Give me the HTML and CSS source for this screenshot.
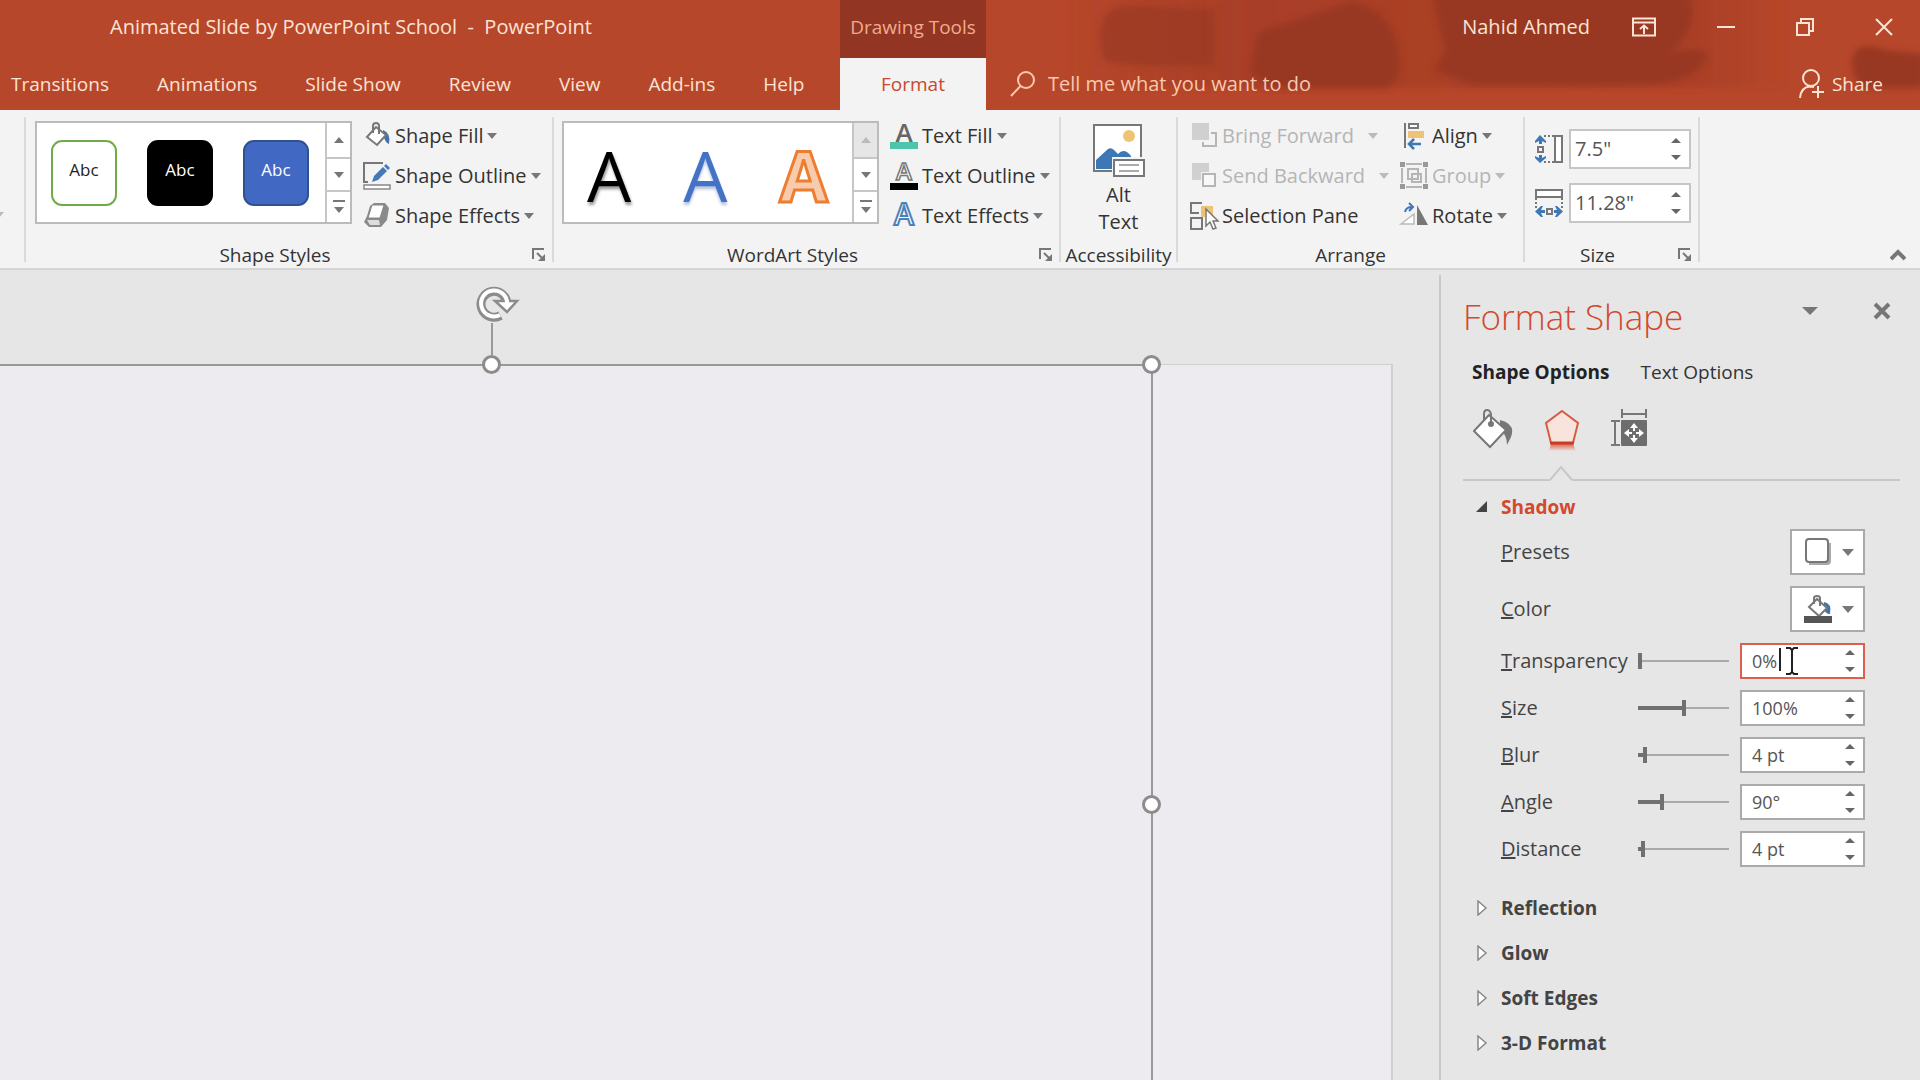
FILE: index.html
```html
<!DOCTYPE html>
<html lang="en">
<head>
    <meta charset="UTF-8">
    <meta name="viewport" content="width=device-width, initial-scale=1.0">
    <title>Animated Slide by PowerPoint School - PowerPoint</title>
    <link rel="stylesheet" href="styles.css">
</head>
<body>
    <header class="app-header">
        <svg class="header-art" width="920" height="110" viewBox="0 0 920 110" aria-hidden="true">
            <defs>
                <filter id="soft" x="-10%" y="-10%" width="120%" height="120%"><feGaussianBlur stdDeviation="3"/></filter>
                <linearGradient id="artFade" x1="0" x2="1" y1="0" y2="0">
                    <stop offset="0" stop-color="#a03a24" stop-opacity="0"/>
                    <stop offset="0.2" stop-color="#a03a24" stop-opacity="0.6"/>
                    <stop offset="0.75" stop-color="#a03a24" stop-opacity="0.5"/>
                    <stop offset="0.85" stop-color="#a03a24" stop-opacity="0"/>
                </linearGradient>
            </defs>
            <rect x="60" y="-10" width="860" height="98" fill="url(#artFade)" filter="url(#soft)"/>
            <g fill="#993824" filter="url(#soft)">
                <path d="M105 14Q120 2 150 6L215 10V66H140L105 62Q95 40 105 14Z" opacity="0.7"/>
                <path d="M258 32L350 2Q385 5 396 40T388 88H270L250 72Z"/>
                <path d="M432-5H690Q700 30 670 52Q710 45 707 58Q695 82 650 85H470L434 70L445 50Z"/>
                <path d="M856 50Q866 42 885 50L925 54V88H862Q845 65 856 50Z"/>
            </g>
        </svg>

        <div class="title-bar">
            <div class="doc-title">Animated Slide by PowerPoint School&nbsp; -&nbsp; PowerPoint</div>
            <div class="tool-title">Drawing Tools</div>
            <div class="window-controls">
                <span class="user-name">Nahid Ahmed</span>
                <button type="button" class="window-btn" aria-label="Ribbon display options">
                    <svg width="24" height="20" viewBox="0 0 24 20" fill="none" stroke="currentColor" stroke-width="2"><path d="M1 1.500H23V18.500H1Z"/><path d="M1 5.500H23M12 17V9M8 12L12 8.500L16 12"/></svg>
                </button>
                <button type="button" class="window-btn" aria-label="Minimize">
                    <svg width="18" height="18" viewBox="0 0 18 18" stroke="currentColor" stroke-width="2"><path d="M0 9H18"/></svg>
                </button>
                <button type="button" class="window-btn" aria-label="Restore">
                    <svg width="18" height="18" viewBox="0 0 18 18" fill="none" stroke="currentColor" stroke-width="2"><path d="M1 5H13V17H1ZM5 5V1H17V13H13"/></svg>
                </button>
                <button type="button" class="window-btn" aria-label="Close">
                    <svg width="18" height="18" viewBox="0 0 18 18" stroke="currentColor" stroke-width="2"><path d="M1 1L17 17M17 1L1 17"/></svg>
                </button>
            </div>
        </div>

        <nav class="tab-bar">
            <div class="tabs">
                <button type="button" class="tab">Transitions</button>
                <button type="button" class="tab">Animations</button>
                <button type="button" class="tab">Slide Show</button>
                <button type="button" class="tab">Review</button>
                <button type="button" class="tab">View</button>
                <button type="button" class="tab">Add-ins</button>
                <button type="button" class="tab">Help</button>
            </div>
            <button type="button" class="tab tab-active">Format</button>
            <button type="button" class="tell-me">
                <svg width="26" height="28" viewBox="0 0 26 28" fill="none" stroke="currentColor" stroke-width="2"><circle cx="16" cy="10" r="8"/><path d="M10.500 16L1 26"/></svg>
                Tell me what you want to do
            </button>
            <button type="button" class="share-btn">
                <svg width="28" height="30" viewBox="0 0 28 30" fill="none" stroke="currentColor" stroke-width="2"><circle cx="13" cy="9" r="8"/><path d="M2 29Q3 18 12 17.500L16 18M20 17V29M14 23H26"/></svg>
                Share
            </button>
        </nav>
    </header>

    <section class="ribbon">
        <div class="group group-cut">
            <span class="caret caret-light"></span>
        </div>

        <div class="group group-styles">
            <div class="group-body">
                <div class="gallery">
                    <div class="gallery-items">
                        <button type="button" class="style-tile tile-outline">Abc</button>
                        <button type="button" class="style-tile tile-black">Abc</button>
                        <button type="button" class="style-tile tile-blue">Abc</button>
                    </div>
                    <div class="gallery-scroll">
                        <button type="button" aria-label="Previous styles"><span class="caret caret-up"></span></button>
                        <button type="button" aria-label="Next styles"><span class="caret"></span></button>
                        <button type="button" aria-label="More styles"><span class="caret caret-more"></span></button>
                    </div>
                </div>
                <div class="commands">
                    <button type="button" class="command">
                        <svg class="icon" viewBox="0 0 28 28"><path d="M20 8Q28 11 26 22Q22 21 20 12Z" fill="#4472a8"/><path d="M4 15L13 5L23 13L14 23Z" fill="#fff" stroke="#777" stroke-width="2"/><path d="M10 11V4Q10 1 13 1T16 4V12" fill="none" stroke="#777" stroke-width="2"/></svg>
                        Shape Fill <span class="caret"></span>
                    </button>
                    <button type="button" class="command">
                        <svg class="icon" viewBox="0 0 28 28"><path d="M20 1H1V20H5" fill="none" stroke="#777" stroke-width="2"/><path d="M1 23H27V27H1Z" fill="#fff" stroke="#888" stroke-width="1.500"/><path d="M9 20L11 14L20 5L24 9L15 18Z" fill="#4478b8"/><path d="M21 4L23 2L27 6L25 8Z" fill="#4478b8"/></svg>
                        Shape Outline <span class="caret"></span>
                    </button>
                    <button type="button" class="command">
                        <svg class="icon" viewBox="0 0 28 28"><path d="M7 4L11 1H22L26 6L24 18L18 25H6L1 20L4 14Z" fill="#8a8a8a"/><path d="M9 3H21L17 16H5Z" fill="#fff" stroke="#888"/><path d="M4 18H16L17 23H7Z" fill="#ddd"/></svg>
                        Shape Effects <span class="caret"></span>
                    </button>
                </div>
            </div>
            <div class="group-caption">Shape Styles</div>
            <button type="button" class="launcher" aria-label="Format shape"><svg width="14" height="14" viewBox="0 0 14 14"><path d="M1 11V1H12M5 5L11 11" fill="none" stroke="#777" stroke-width="2"/><path d="M13 6V13H6Z" fill="#777"/></svg></button>
        </div>

        <div class="group group-wordart">
            <div class="group-body">
                <div class="gallery">
                    <div class="gallery-items wordart-items">
                        <button type="button" class="wordart wordart-black">A</button>
                        <button type="button" class="wordart wordart-blue">A</button>
                        <button type="button" class="wordart wordart-orange">A</button>
                    </div>
                    <div class="gallery-scroll">
                        <button type="button" class="scroll-off" aria-label="Previous WordArt" disabled><span class="caret caret-up caret-light"></span></button>
                        <button type="button" aria-label="Next WordArt"><span class="caret"></span></button>
                        <button type="button" aria-label="More WordArt"><span class="caret caret-more"></span></button>
                    </div>
                </div>
                <div class="commands">
                    <button type="button" class="command">
                        <svg class="icon" viewBox="0 0 28 28"><text x="14" y="20" class="glyph glyph-fill">A</text><path d="M0 20H28V27H0Z" fill="#4cc5aa"/></svg>
                        Text Fill <span class="caret"></span>
                    </button>
                    <button type="button" class="command">
                        <svg class="icon" viewBox="0 0 28 28"><text x="14" y="18" class="glyph glyph-outline">A</text><path d="M0 21H28V28H0Z" fill="#000"/></svg>
                        Text Outline <span class="caret"></span>
                    </button>
                    <button type="button" class="command">
                        <svg class="icon" viewBox="0 0 28 28"><text x="14" y="23" class="glyph glyph-glow">A</text></svg>
                        Text Effects <span class="caret"></span>
                    </button>
                </div>
            </div>
            <div class="group-caption">WordArt Styles</div>
            <button type="button" class="launcher" aria-label="Format text effects"><svg width="14" height="14" viewBox="0 0 14 14"><path d="M1 11V1H12M5 5L11 11" fill="none" stroke="#777" stroke-width="2"/><path d="M13 6V13H6Z" fill="#777"/></svg></button>
        </div>

        <div class="group group-access">
            <button type="button" class="alt-text">
                <svg width="52" height="54" viewBox="0 0 52 54"><path d="M1 1H48V47H1Z" fill="#fff" stroke="#777" stroke-width="2"/><circle cx="36" cy="12" r="6" fill="#efc374"/><path d="M3 45V36L15 25Q18 23 21 26L25 30Q31 23 38 32V45Z" fill="#3d77b5"/><path d="M19 33H53V54H19Z" fill="#f3f3f3"/><path d="M21 36H51V52H21Z" fill="#fff" stroke="#777" stroke-width="2"/><path d="M26 41H46M26 47H46" stroke="#aaa" stroke-width="2"/></svg>
                <span>Alt<br>Text</span>
            </button>
            <div class="group-caption">Accessibility</div>
        </div>

        <div class="group group-arrange">
            <div class="group-body">
                <div class="commands commands-wide">
                    <button type="button" class="command" disabled>
                        <svg class="icon" viewBox="0 0 28 28"><path d="M2 1H19V18H2Z" fill="#d0d0d0"/><path d="M21 11H26V24H13V20" fill="none" stroke="#b5b5b5" stroke-width="2"/></svg>
                        Bring Forward <span class="caret caret-light caret-split"></span>
                    </button>
                    <button type="button" class="command" disabled>
                        <svg class="icon" viewBox="0 0 28 28"><path d="M2 1H19V10H11V18H2Z" fill="#d0d0d0"/><path d="M13 12H25V24H13Z" fill="#f8f8f8" stroke="#b5b5b5" stroke-width="2"/></svg>
                        Send Backward <span class="caret caret-light caret-split"></span>
                    </button>
                    <button type="button" class="command">
                        <svg class="icon" viewBox="0 0 28 28"><path d="M12 1H1V11H9M1 16H12V27H1Z" fill="none" stroke="#777" stroke-width="2"/><path d="M11 4H23V14H19V8H15V15H11Z" fill="#efc374"/><path d="M16 7V24L20 20L23 27L26 26L23 19H28Z" fill="#fff" stroke="#777" stroke-width="1.500"/></svg>
                        Selection Pane
                    </button>
                </div>
                <div class="commands">
                    <button type="button" class="command">
                        <svg class="icon" viewBox="0 0 28 28"><path d="M5 1V26" stroke="#777" stroke-width="2"/><path d="M9 2H18V6H9Z" fill="#fff" stroke="#777" stroke-width="2"/><path d="M8 9H24V16H8Z" fill="#efc374"/><path d="M21 22H9M14 17L9 22L14 27" fill="none" stroke="#3d77b5" stroke-width="2.500"/></svg>
                        Align <span class="caret"></span>
                    </button>
                    <button type="button" class="command" disabled>
                        <svg class="icon" viewBox="0 0 28 28"><path d="M6 2H22M6 25H22M2 6V21M26 6V21M8 7H18V17H8ZM12 12H21V20H12Z" fill="none" stroke="#b5b5b5" stroke-width="2"/><path d="M0 0H5V5H0ZM23 0H28V5H23ZM0 22H5V27H0ZM23 22H28V27H23Z" fill="#999"/></svg>
                        Group <span class="caret caret-light"></span>
                    </button>
                    <button type="button" class="command">
                        <svg class="icon" viewBox="0 0 28 28"><path d="M1 22L14 12V22Z" fill="#fff" stroke="#bbb" stroke-width="1.500"/><path d="M17 3L28 23H17Z" fill="#777"/><path d="M5 10Q6 5 12 5M9 1L13 5L9 9" fill="none" stroke="#3d77b5" stroke-width="2"/></svg>
                        Rotate <span class="caret"></span>
                    </button>
                </div>
            </div>
            <div class="group-caption">Arrange</div>
        </div>

        <div class="group group-size">
            <div class="size-fields">
                <div class="size-field">
                    <label for="shapeHeight" aria-label="Height"><svg class="icon" viewBox="0 0 28 28"><path d="M20 1H27V27H20Z" fill="#fff" stroke="#777" stroke-width="2"/><path d="M9 1H20M9 27H20" stroke="#777" stroke-width="2" stroke-dasharray="2 2"/><path d="M3 12H8V17H3Z" fill="none" stroke="#777" stroke-width="2"/><path d="M0 6L5 0L11 6V8L7 6V9H4V6L0 8ZM0 21L4 23V20H7V23L11 21V23L5 28L0 23Z" fill="#3d77b5"/></svg></label>
                    <div class="spinner"><input type="text" id="shapeHeight" value='7.5"'><span class="spin-btns"><button type="button" aria-label="Increase"></button><button type="button" class="down" aria-label="Decrease"></button></span></div>
                </div>
                <div class="size-field">
                    <label for="shapeWidth" aria-label="Width"><svg class="icon" viewBox="0 0 28 28"><path d="M1 1H27V8H1Z" fill="#fff" stroke="#777" stroke-width="2"/><path d="M1 9V20M27 9V20" stroke="#777" stroke-width="2" stroke-dasharray="2 2"/><path d="M12 20H17V25H12Z" fill="none" stroke="#777" stroke-width="2"/><path d="M6 17L0 22.500L6 28H8L6 24H10V21H6L8 17ZM22 17L28 22.500L22 28H20L22 24H19V21H22L20 17Z" fill="#3d77b5"/></svg></label>
                    <div class="spinner"><input type="text" id="shapeWidth" value='11.28"'><span class="spin-btns"><button type="button" aria-label="Increase"></button><button type="button" class="down" aria-label="Decrease"></button></span></div>
                </div>
            </div>
            <div class="group-caption">Size</div>
            <button type="button" class="launcher" aria-label="Size and position"><svg width="14" height="14" viewBox="0 0 14 14"><path d="M1 11V1H12M5 5L11 11" fill="none" stroke="#777" stroke-width="2"/><path d="M13 6V13H6Z" fill="#777"/></svg></button>
        </div>

        <button type="button" class="collapse-btn" aria-label="Collapse the ribbon">
            <svg width="16" height="12" viewBox="0 0 16 12"><path d="M1 10L8 3L15 10" fill="none" stroke="#777" stroke-width="4"/></svg>
        </button>
    </section>

    <main class="workspace">
        <div class="canvas">
            <div class="slide"></div>
            <div class="selection">
                <span class="handle handle-top"></span>
                <span class="handle handle-corner"></span>
                <span class="handle handle-right"></span>
                <svg class="rotate-handle" width="46" height="74" viewBox="0 0 46 74"><path d="M18 38V70" stroke="#999" stroke-width="2"/><path d="M26.500 30.500A13 13 0 1 1 33 19" fill="none" stroke="#8c8c8c" stroke-width="9"/><path d="M21 16H43L33 27Z" fill="#fff" stroke="#8c8c8c" stroke-width="2.500"/><path d="M26 30A13 13 0 1 1 33 20" fill="none" stroke="#fff" stroke-width="4"/></svg>
            </div>
        </div>

        <aside class="pane">
            <div class="pane-header">
                <h1>Format Shape</h1>
                <button type="button" class="pane-btn" aria-label="Task pane options"><svg width="16" height="8" viewBox="0 0 16 8"><path d="M0 0H16L8 8Z" fill="#777"/></svg></button>
                <button type="button" class="pane-btn" aria-label="Close pane"><svg width="18" height="18" viewBox="0 0 18 18"><path d="M2 2L16 16M16 2L2 16" stroke="#777" stroke-width="4"/></svg></button>
            </div>

            <div class="pane-tabs">
                <button type="button" class="pane-tab pane-tab-active">Shape Options</button>
                <button type="button" class="pane-tab">Text Options</button>
            </div>

            <div class="pane-icons">
                <button type="button" aria-label="Fill &amp; Line"><svg width="40" height="40" viewBox="0 0 40 40"><path d="M27 11Q43 15 38 28L34 36Q34 26 27 20Z" fill="#777"/><path d="M1 22L16 6L33 21L17 38Z" fill="#fff" stroke="#777" stroke-width="2"/><path d="M11 11V5Q11 1 14 1T18 5V14" fill="none" stroke="#777" stroke-width="2"/><circle cx="18" cy="15" r="3" fill="#777"/></svg></button>
                <button type="button" aria-label="Effects"><svg width="36" height="44" viewBox="0 0 36 44"><defs><linearGradient id="reflect" x1="0" x2="0" y1="0" y2="1"><stop offset="0" stop-color="#e0634b"/><stop offset="1" stop-color="#e0634b" stop-opacity="0"/></linearGradient></defs><path d="M7 35H29L32 42H5Z" fill="url(#reflect)"/><path d="M18 2L34 14L29 34H7L2 14Z" fill="#f9e3dd" stroke="#d75b43" stroke-width="2"/><path d="M6 34H30" stroke="#c33e22" stroke-width="3"/></svg></button>
                <button type="button" aria-label="Size &amp; Properties"><svg width="37" height="38" viewBox="0 0 37 38"><path d="M11 0V9M35 0V9M11 5H35M0 12H9M0 36H9M4 12V36" fill="none" stroke="#777" stroke-width="2"/><rect x="10" y="11" width="26" height="26" rx="1" fill="#6d6d6d"/><path d="M23 14L27 19H24V22H22V19H19ZM23 34L27 29H24V26H22V29H19ZM13 24L18 20V23H21V25H18V28ZM33 24L28 20V23H25V25H28V28Z" fill="#fff"/></svg></button>
            </div>
            <div class="pane-divider"><svg width="24" height="16" viewBox="0 0 24 16"><path d="M1 15L12 2L23 15" fill="none" stroke="#c8c8c8" stroke-width="2"/></svg></div>

            <button type="button" class="section-title section-open"><svg width="12" height="12" viewBox="0 0 12 12"><path d="M11 0V11H0Z" fill="#444"/></svg>Shadow</button>

            <div class="fields">
                <div class="field field-picker">
                    <label for="presets"><u>P</u>resets</label>
                    <button type="button" class="picker" id="presets">
                        <svg width="28" height="30" viewBox="0 0 28 30"><path d="M5 25V28H23Q27 28 27 24V6H24V25Z" fill="#aaa"/><rect x="2" y="2" width="22" height="23" rx="3" fill="#fff" stroke="#777" stroke-width="2"/></svg>
                        <span class="caret caret-big"></span>
                    </button>
                </div>
                <div class="field field-picker">
                    <label for="shadowColor"><u>C</u>olor</label>
                    <button type="button" class="picker" id="shadowColor">
                        <svg width="28" height="30" viewBox="0 0 28 30"><path d="M20 8Q28 9 26 20Q21 20 20 14Z" fill="#4472a8"/><path d="M5 13L13 5L23 14L15 22Z" fill="#fff" stroke="#777" stroke-width="2"/><path d="M10 10V4Q10 2 13 2T16 4V12" fill="none" stroke="#777" stroke-width="2"/><path d="M0 22H28V29H0Z" fill="#555"/></svg>
                        <span class="caret caret-big"></span>
                    </button>
                </div>
                <div class="field">
                    <label for="transparency"><u>T</u>ransparency</label>
                    <input type="range" class="slider" style="--value: 0%" value="0" aria-label="Transparency slider">
                    <div class="spinner spinner-focus"><input type="text" id="transparency" value="0%"><span class="text-caret"></span>
                        <svg class="i-beam" width="12" height="28" viewBox="0 0 12 28"><path d="M0 1H4L6 3L8 1H12M6 3V25M0 27H4L6 25L8 27H12" fill="none" stroke="#222" stroke-width="2"/></svg>
                        <span class="spin-btns"><button type="button" aria-label="Increase"></button><button type="button" class="down" aria-label="Decrease"></button></span></div>
                </div>
                <div class="field">
                    <label for="size"><u>S</u>ize</label>
                    <input type="range" class="slider" style="--value: 51%" value="51" aria-label="Size slider">
                    <div class="spinner"><input type="text" id="size" value="100%"><span class="spin-btns"><button type="button" aria-label="Increase"></button><button type="button" class="down" aria-label="Decrease"></button></span></div>
                </div>
                <div class="field">
                    <label for="blur"><u>B</u>lur</label>
                    <input type="range" class="slider" style="--value: 6%" value="6" aria-label="Blur slider">
                    <div class="spinner"><input type="text" id="blur" value="4 pt"><span class="spin-btns"><button type="button" aria-label="Increase"></button><button type="button" class="down" aria-label="Decrease"></button></span></div>
                </div>
                <div class="field">
                    <label for="angle"><u>A</u>ngle</label>
                    <input type="range" class="slider" style="--value: 25%" value="25" aria-label="Angle slider">
                    <div class="spinner"><input type="text" id="angle" value="90°"><span class="spin-btns"><button type="button" aria-label="Increase"></button><button type="button" class="down" aria-label="Decrease"></button></span></div>
                </div>
                <div class="field">
                    <label for="distance"><u>D</u>istance</label>
                    <input type="range" class="slider" style="--value: 4%" value="4" aria-label="Distance slider">
                    <div class="spinner"><input type="text" id="distance" value="4 pt"><span class="spin-btns"><button type="button" aria-label="Increase"></button><button type="button" class="down" aria-label="Decrease"></button></span></div>
                </div>
            </div>

            <button type="button" class="section-title"><svg width="12" height="16" viewBox="0 0 12 16"><path d="M2 1L10 8L2 15Z" fill="#fff" stroke="#888" stroke-width="1.500"/></svg>Reflection</button>
            <button type="button" class="section-title"><svg width="12" height="16" viewBox="0 0 12 16"><path d="M2 1L10 8L2 15Z" fill="#fff" stroke="#888" stroke-width="1.500"/></svg>Glow</button>
            <button type="button" class="section-title"><svg width="12" height="16" viewBox="0 0 12 16"><path d="M2 1L10 8L2 15Z" fill="#fff" stroke="#888" stroke-width="1.500"/></svg>Soft Edges</button>
            <button type="button" class="section-title"><svg width="12" height="16" viewBox="0 0 12 16"><path d="M2 1L10 8L2 15Z" fill="#fff" stroke="#888" stroke-width="1.500"/></svg>3-D Format</button>
            <button type="button" class="section-title"><svg width="12" height="16" viewBox="0 0 12 16"><path d="M2 1L10 8L2 15Z" fill="#fff" stroke="#888" stroke-width="1.500"/></svg>3-D Rotation</button>
        </aside>
    </main>
</body>
</html>
```

FILE: styles.css
```css
* {
    box-sizing: border-box;
}

body {
    margin: 0;
    height: 100vh;
    display: flex;
    flex-direction: column;
    overflow: hidden;
    background-color: #e6e6e6;
    font-family: "Open Sans", "Noto Sans", sans-serif;
    font-size: 20px;
    line-height: 28px;
    color: #333;
}

button,
input {
    font: inherit;
    color: inherit;
}

button {
    margin: 0;
    padding: 0;
    border: none;
    background: none;
    white-space: nowrap;
}

svg {
    display: block;
    flex-shrink: 0;
}

/* Header */
.app-header {
    position: relative;
    flex-shrink: 0;
    background-color: #b7472a;
    color: #fbe3d6;
}

.header-art {
    position: absolute;
    top: 0;
    right: 0;
}

.title-bar,
.tab-bar {
    position: relative;
    display: flex;
    align-items: center;
}

.title-bar {
    height: 58px;
}

.doc-title {
    width: 840px;
    padding: 0 0 4px 110px;
    white-space: nowrap;
}

.tool-title {
    width: 146px;
    height: 58px;
    padding-top: 13px;
    background-color: #923522;
    color: #f0ab90;
    font-size: 19px;
    text-align: center;
    white-space: nowrap;
}

.window-controls {
    display: flex;
    align-items: center;
    gap: 61px;
    margin-left: auto;
    padding: 0 27px 4px 0;
}

.user-name {
    margin-right: -19px;
}

.tab-bar {
    height: 52px;
}

.tabs {
    display: flex;
    width: 840px;
    padding-left: 11px;
    gap: 48px;
}

.tab {
    font-size: 19px;
}

.tab-active {
    width: 146px;
    height: 52px;
    background-color: #f3f3f3;
    color: #c8492e;
}

.tell-me,
.share-btn {
    display: flex;
    align-items: center;
}

.tell-me {
    gap: 12px;
    margin-left: 24px;
    color: #f7c9b0;
}

.share-btn {
    gap: 6px;
    margin-left: auto;
    padding-right: 37px;
    font-size: 19px;
}

/* Ribbon */
.ribbon {
    position: relative;
    display: flex;
    flex-shrink: 0;
    height: 160px;
    padding-top: 7px;
    background-color: #f3f3f3;
    border-bottom: 2px solid #d5d5d5;
}

.group {
    position: relative;
    display: flex;
    flex-direction: column;
    height: 145px;
    border-right: 2px solid #dadada;
}

.group-cut {
    align-items: flex-start;
    width: 26px;
    padding-top: 95px;
}

.group-styles {
    width: 528px;
    padding-left: 9px;
}

.group-wordart {
    width: 507px;
    padding-left: 8px;
}

.group-access {
    width: 117px;
}

.group-arrange {
    width: 347px;
    padding-left: 12px;
}

.group-size {
    width: 175px;
    padding-left: 10px;
}

.group-body {
    display: flex;
    height: 116px;
}

.group-caption {
    position: absolute;
    right: 0;
    bottom: -7px;
    left: 0;
    text-align: center;
    font-size: 19px;
}

.group-styles .group-caption,
.group-wordart .group-caption,
.group-size .group-caption {
    right: 28px;
}

.launcher {
    position: absolute;
    right: 6px;
    bottom: 0;
}

.gallery {
    display: flex;
    width: 317px;
    height: 103px;
    margin-top: 4px;
    background-color: #fff;
    border: 2px solid #bbb;
}

.gallery-items {
    display: flex;
    flex: 1;
    align-items: center;
    gap: 30px;
    padding-left: 14px;
}

.wordart-items {
    gap: 52px;
    padding-left: 23px;
}

.gallery-scroll {
    display: grid;
    grid-template-rows: 34px 33px 1fr;
    width: 25px;
    border-left: 2px solid #c6c6c6;
}

.gallery-scroll button {
    display: flex;
    align-items: center;
    justify-content: center;
}

.gallery-scroll button + button {
    border-top: 2px solid #c6c6c6;
}

.gallery-scroll .scroll-off {
    background-color: #e6e6e6;
}

.style-tile {
    width: 66px;
    height: 66px;
    padding-bottom: 5px;
    border: 2px solid #000;
    border-radius: 11px;
    font-size: 17px;
    font-weight: 500;
}

.tile-outline {
    border-color: #70ad47;
    color: #222;
}

.tile-black {
    background-color: #000;
    color: #fff;
}

.tile-blue {
    background-color: #4169c4;
    border-color: #2f528f;
    color: #fff;
}

.wordart {
    padding-top: 4px;
    font-size: 70px;
    line-height: 70px;
    font-weight: 500;
}

.wordart-black {
    color: #000;
    text-shadow: 1px 3px 3px #999;
}

.wordart-blue {
    color: #4472c4;
    text-shadow: 0 3px 3px #b4c2e2;
}

.wordart-orange {
    color: #f8cbad;
    font-weight: 700;
    -webkit-text-stroke: 3px #ed7d31;
}

.caret {
    display: inline-block;
    flex-shrink: 0;
    border: 5px solid transparent;
    border-top: 6px solid #777;
    border-bottom: none;
}

.caret-up {
    border-top: none;
    border-bottom: 6px solid #777;
}

.caret-light {
    border-top-color: #bbb;
    border-bottom-color: #bbb;
}

.caret-big {
    border-width: 7px 6px 0;
}

.group-cut .caret {
    margin-left: -6px;
}

.caret-more {
    position: relative;
    margin-top: 6px;
}

.caret-more::before {
    content: "";
    position: absolute;
    top: -13px;
    left: -6px;
    width: 12px;
    height: 2px;
    background-color: #777;
}

.commands {
    display: flex;
    flex-direction: column;
    align-items: flex-start;
    gap: 12px;
    padding: 5px 0 0 11px;
}

.commands-wide {
    width: 199px;
    padding-left: 0;
}

.command {
    display: flex;
    align-items: center;
    gap: 4px;
    height: 28px;
}

.command:disabled {
    color: #b5b5b5;
}

.caret-split {
    margin-left: 10px;
}

.icon {
    width: 28px;
    height: 28px;
    overflow: visible;
}

.glyph {
    font-size: 26px;
    font-weight: 600;
    text-anchor: middle;
}

.glyph-fill {
    fill: #666;
}

.glyph-outline {
    fill: #fff;
    stroke: #777;
    stroke-width: 1.5px;
    font-size: 24px;
}

.glyph-glow {
    fill: #fff;
    stroke: #4d80b8;
    stroke-width: 2px;
    font-size: 30px;
}

.alt-text {
    display: flex;
    flex-direction: column;
    align-items: center;
    padding-top: 7px;
    gap: 3px;
    line-height: 27px;
}

.size-fields {
    display: flex;
    flex-direction: column;
    gap: 14px;
    padding-top: 12px;
}

.size-field {
    display: flex;
    align-items: center;
    gap: 6px;
}

.spinner {
    position: relative;
    display: flex;
    width: 122px;
    height: 40px;
    background-color: #fff;
    border: 2px solid #c6c6c6;
}

.spinner input {
    flex: 1;
    min-width: 0;
    padding: 0 0 0 4px;
    border: none;
    outline: none;
    background: none;
    color: #555;
}

.spin-btns {
    display: flex;
    flex-direction: column;
    justify-content: center;
    gap: 12px;
    padding-right: 8px;
}

.spin-btns button {
    border: 5px solid transparent;
    border-top: none;
    border-bottom: 5px solid #666;
}

.spin-btns .down {
    border-top: 5px solid #666;
    border-bottom: none;
}

.collapse-btn {
    position: absolute;
    right: 14px;
    bottom: 7px;
}

/* Slide area */
.workspace {
    display: flex;
    flex: 1;
    min-height: 0;
}

.canvas {
    position: relative;
    flex: 1;
    overflow: hidden;
}

.slide {
    position: absolute;
    top: 94px;
    right: 46px;
    bottom: 0;
    left: 0;
    background-color: #edebf0;
    border: solid #cfcfcf;
    border-width: 1px 2px 0 0;
}

.selection {
    position: absolute;
    top: 94px;
    right: 286px;
    left: 0;
    height: 880px;
    border: solid #999;
    border-width: 2px 2px 0 0;
}

.handle {
    position: absolute;
    width: 19px;
    height: 19px;
    background-color: #fff;
    border: 3px solid #8c8c8c;
    border-radius: 50%;
}

.handle-top {
    top: -11px;
    left: 482px;
}

.handle-corner {
    top: -11px;
    right: -10px;
}

.handle-right {
    top: 429px;
    right: -10px;
}

.rotate-handle {
    position: absolute;
    top: -81px;
    left: 474px;
}

/* Format Shape pane */
.pane {
    width: 481px;
    margin-top: 5px;
    padding: 19px 20px 0 22px;
    border-left: 2px solid #c8c8c8;
    overflow: hidden;
}

.pane-header {
    display: flex;
    align-items: flex-start;
    height: 64px;
}

.pane-header h1 {
    flex: 1;
    margin: 0;
    font-size: 35px;
    line-height: 46px;
    font-weight: 300;
    color: #d2492e;
}

.pane-btn {
    display: flex;
    align-items: center;
    height: 34px;
    margin: 0 9px 0 46px;
}

.pane-tabs {
    display: flex;
    gap: 31px;
    padding-left: 9px;
}

.pane-tab {
    font-size: 19px;
}

.pane-tab-active {
    font-weight: 700;
    color: #222;
}

.pane-icons {
    display: flex;
    align-items: flex-start;
    gap: 31px;
    height: 56px;
    margin-top: 23px;
    padding-left: 10px;
}

.pane-divider {
    height: 16px;
    padding-left: 86px;
    margin-bottom: 12px;
    /* the line stops on both sides of the notch */
    background: linear-gradient(to right, #c8c8c8 87px, transparent 87px 109px, #c8c8c8 109px) 0 100% / 100% 2px no-repeat;
}

.section-title {
    display: flex;
    align-items: center;
    gap: 13px;
    height: 28px;
    margin: 0 0 17px 13px;
    font-size: 19px;
    font-weight: 700;
    color: #444;
}

.section-open {
    margin-bottom: 8px;
    color: #d2492e;
}

.fields {
    display: flex;
    flex-direction: column;
    gap: 11px;
    margin-bottom: 27px;
    padding: 0 35px 0 38px;
}

.field {
    display: flex;
    align-items: center;
    height: 36px;
    color: #444;
}

.field label {
    width: 137px;
}

.field-picker {
    height: 46px;
    justify-content: space-between;
}

.picker {
    display: flex;
    align-items: center;
    gap: 10px;
    width: 75px;
    height: 46px;
    padding-left: 12px;
    background-color: #fff;
    border: 2px solid #aaa;
}

.slider {
    appearance: none;
    width: 91px;
    height: 16px;
    margin: 0 11px 0 0;
    background: linear-gradient(#707070, #707070) 0 50% / var(--value) 4px no-repeat,
                linear-gradient(#aaa, #aaa) 0 50% / 100% 2px no-repeat;
}

.slider::-webkit-slider-thumb {
    appearance: none;
    width: 4px;
    height: 16px;
    background-color: #707070;
}

.field .spinner {
    width: 125px;
    height: 36px;
    border-color: #aaa;
}

.field .spinner input {
    padding-left: 10px;
    font-size: 18px;
}

.field .spinner-focus {
    border-color: #d9604e;
}

.text-caret {
    position: absolute;
    top: 3px;
    left: 37px;
    width: 2px;
    height: 23px;
    background-color: #222;
}

.i-beam {
    position: absolute;
    top: 2px;
    left: 44px;
}
```
